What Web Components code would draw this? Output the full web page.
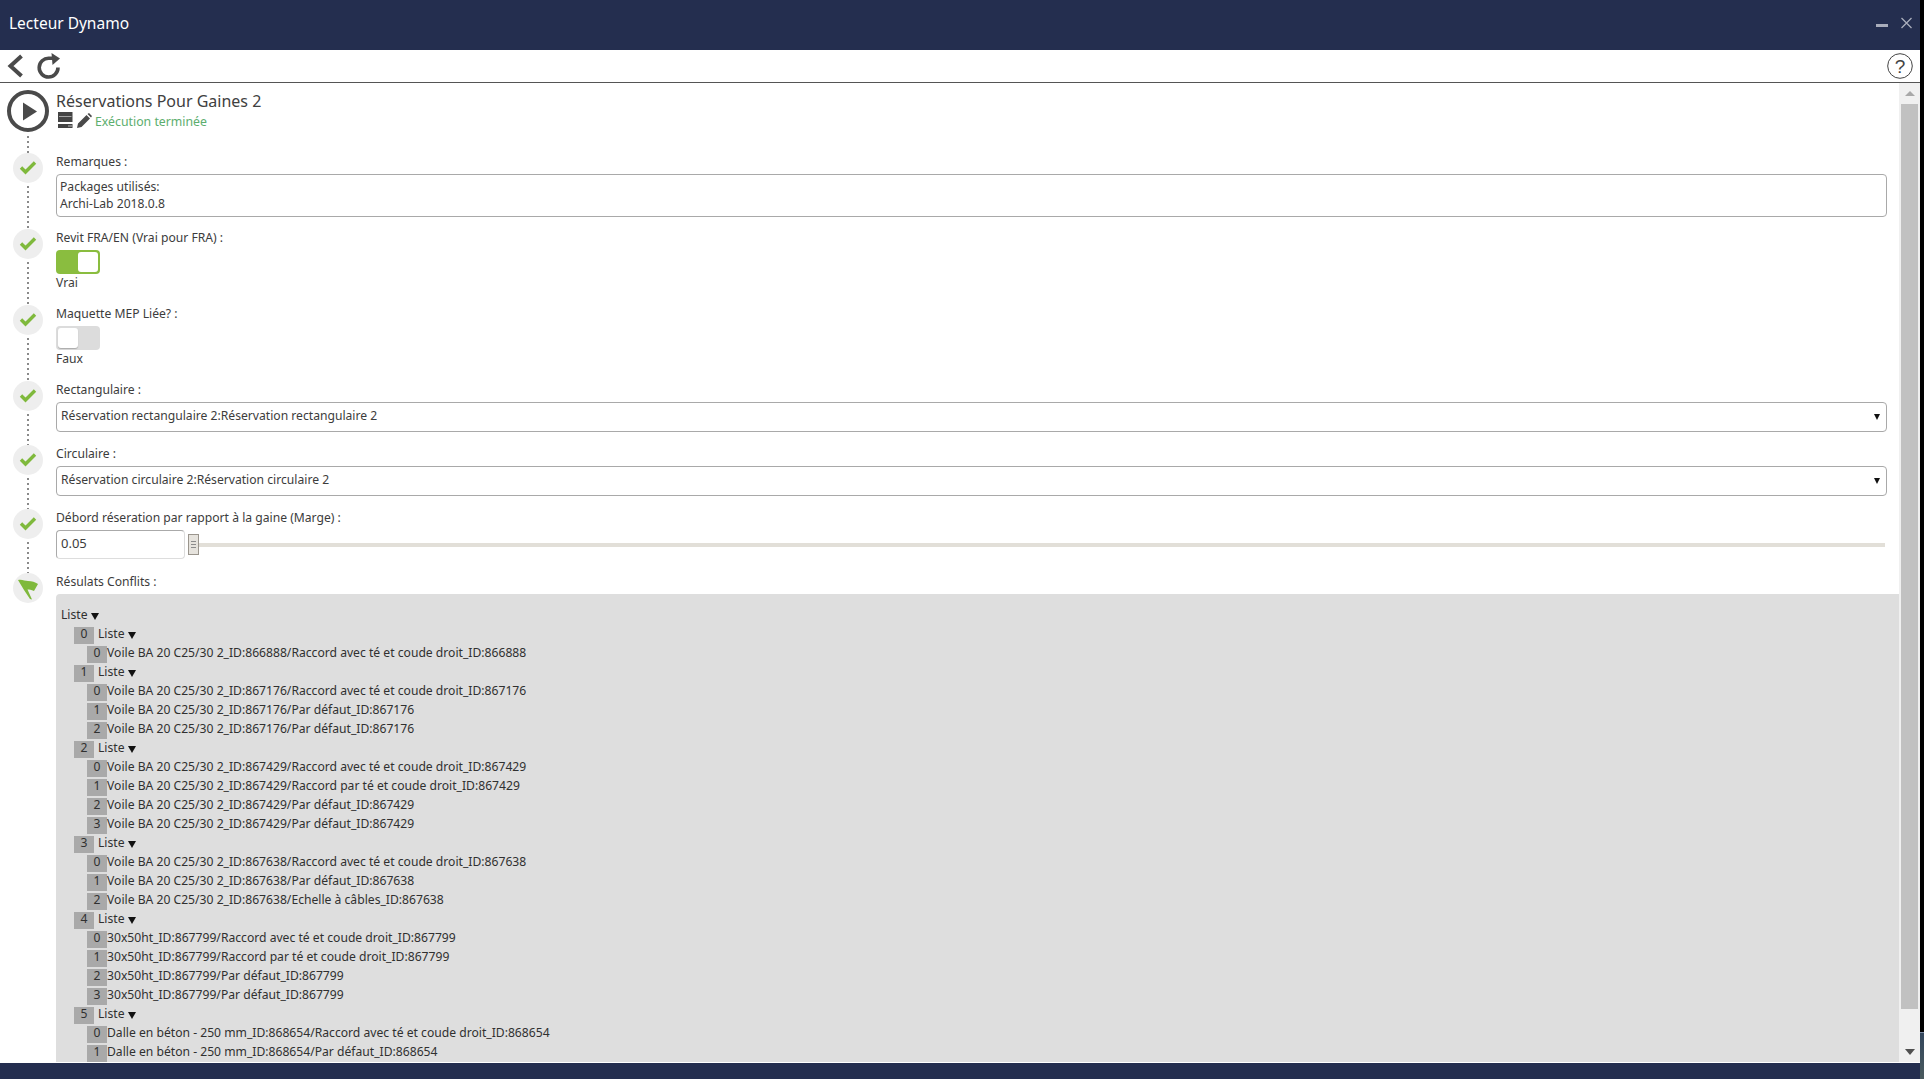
<!DOCTYPE html>
<html lang="fr">
<head>
<meta charset="utf-8">
<title>Lecteur Dynamo</title>
<style>
  html, body { margin: 0; height: 100%; background: #000; overflow: hidden; }
  body { display: flex; font-family: "Noto Sans", "Liberation Sans", sans-serif; font-size: 12px; color: #3c3c3c; }
</style>
</head>
<body>
<player-window>
  <player-step slot="steps" kind="play">
    <graph-header name="Réservations Pour Gaines 2" status="Exécution terminée"></graph-header>
  </player-step>
  <player-step slot="steps" label="Remarques :">
    <note-box>Packages utilisés:<br>Archi-Lab 2018.0.8</note-box>
  </player-step>
  <player-step slot="steps" label="Revit FRA/EN (Vrai pour FRA) :">
    <bool-toggle on></bool-toggle>
  </player-step>
  <player-step slot="steps" label="Maquette MEP Liée? :">
    <bool-toggle></bool-toggle>
  </player-step>
  <player-step slot="steps" label="Rectangulaire :">
    <drop-select>Réservation rectangulaire 2:Réservation rectangulaire 2</drop-select>
  </player-step>
  <player-step slot="steps" label="Circulaire :">
    <drop-select>Réservation circulaire 2:Réservation circulaire 2</drop-select>
  </player-step>
  <player-step slot="steps" label="Débord réseration par rapport à la gaine (Marge) :">
    <number-slider value="0.05"></number-slider>
  </player-step>
  <player-step slot="steps" kind="flag" last label="Résulats Conflits :">
    <result-panel>
      <list-group index="0">
        <list-item index="0">Voile BA 20 C25/30 2_ID:866888/Raccord avec té et coude droit_ID:866888</list-item>
      </list-group>
      <list-group index="1">
        <list-item index="0">Voile BA 20 C25/30 2_ID:867176/Raccord avec té et coude droit_ID:867176</list-item>
        <list-item index="1">Voile BA 20 C25/30 2_ID:867176/Par défaut_ID:867176</list-item>
        <list-item index="2">Voile BA 20 C25/30 2_ID:867176/Par défaut_ID:867176</list-item>
      </list-group>
      <list-group index="2">
        <list-item index="0">Voile BA 20 C25/30 2_ID:867429/Raccord avec té et coude droit_ID:867429</list-item>
        <list-item index="1">Voile BA 20 C25/30 2_ID:867429/Raccord par té et coude droit_ID:867429</list-item>
        <list-item index="2">Voile BA 20 C25/30 2_ID:867429/Par défaut_ID:867429</list-item>
        <list-item index="3">Voile BA 20 C25/30 2_ID:867429/Par défaut_ID:867429</list-item>
      </list-group>
      <list-group index="3">
        <list-item index="0">Voile BA 20 C25/30 2_ID:867638/Raccord avec té et coude droit_ID:867638</list-item>
        <list-item index="1">Voile BA 20 C25/30 2_ID:867638/Par défaut_ID:867638</list-item>
        <list-item index="2">Voile BA 20 C25/30 2_ID:867638/Echelle à câbles_ID:867638</list-item>
      </list-group>
      <list-group index="4">
        <list-item index="0">30x50ht_ID:867799/Raccord avec té et coude droit_ID:867799</list-item>
        <list-item index="1">30x50ht_ID:867799/Raccord par té et coude droit_ID:867799</list-item>
        <list-item index="2">30x50ht_ID:867799/Par défaut_ID:867799</list-item>
        <list-item index="3">30x50ht_ID:867799/Par défaut_ID:867799</list-item>
      </list-group>
      <list-group index="5">
        <list-item index="0">Dalle en béton - 250 mm_ID:868654/Raccord avec té et coude droit_ID:868654</list-item>
        <list-item index="1">Dalle en béton - 250 mm_ID:868654/Par défaut_ID:868654</list-item>
      </list-group>
    </result-panel>
  </player-step>
</player-window>
<desktop-edge></desktop-edge>

<script>
function shadow(el, html) {
  el.attachShadow({ mode: 'open' }).innerHTML = html;
}

const TRIANGLE = `<svg width="8" height="7" viewBox="0 0 8 7" style="display:inline-block;margin-left:3px;vertical-align:-0.5px"><path d="M0 0H8L4 7Z" fill="#111"/></svg>`;

class PlayerWindow extends HTMLElement {
  constructor() {
    super();
    shadow(this, `
      <style>
        :host { display: flex; flex-direction: column; flex: 0 0 1920px; height: 1079px; background: #fff; }
        .title { flex: 0 0 50px; background: #242e4f; color: #fff; display: flex; align-items: center;
                 justify-content: space-between; padding: 0 8px 4px 9px; box-sizing: border-box; font-size: 15.5px; }
        .win { display: flex; align-items: center; gap: 13px; color: #a9adbb; }
        .tools { flex: 0 0 33px; box-sizing: border-box; border-bottom: 1px solid #555; display: flex; align-items: center; padding: 0 7px 0 7px; gap: 12px; }
        .tools svg { display: block; }
        .tools .help { margin-left: auto; }
        .body { flex: 1 1 auto; min-height: 0; display: flex; }
        .scroll { flex: 1 1 auto; min-width: 0; overflow: hidden; display: flex; flex-direction: column; }
        .bar { flex: 0 0 21px; background: #f0f0f0; display: flex; flex-direction: column; align-items: center; }
        .arrow { flex: 0 0 21px; display: flex; align-items: center; justify-content: center; }
        .thumb { flex: 1 1 auto; width: 17px; background: #c1c1c1; }
        .after { flex: 0 0 32px; }
        .foot { flex: 0 0 17px; box-sizing: border-box; background: #242e4f; border-top: 1px solid #fff; }
      </style>
      <div class="title">
        <span>Lecteur Dynamo</span>
        <span class="win">
          <svg width="12" height="12" viewBox="0 0 12 12"><rect y="7" width="12" height="3" fill="currentColor"/></svg>
          <svg width="11" height="12" viewBox="0 0 11 12"><path d="M.5 1 10.5 11M10.5 1 .5 11" stroke="currentColor" stroke-width="1.3" fill="none"/></svg>
        </span>
      </div>
      <div class="tools">
        <svg width="17" height="24" viewBox="0 0 17 24"><path d="M14.5 2 3.5 12 14.5 22" fill="none" stroke="#4a4a4a" stroke-width="4"/></svg>
        <svg width="26" height="26" viewBox="0 0 26 26"><path d="M22 14.5A9.4 9.4 0 1 1 13 5.2H18" fill="none" stroke="#4a4a4a" stroke-width="3.6"/><path d="M15.5 0 24 5.5 16.5 12Z" fill="#4a4a4a"/></svg>
        <svg class="help" width="26" height="26" viewBox="0 0 26 26"><circle cx="13" cy="13" r="12.3" fill="none" stroke="#444" stroke-width="1"/><text x="13" y="19.5" text-anchor="middle" font-family="Liberation Sans, sans-serif" font-size="19" fill="#444">?</text></svg>
      </div>
      <div class="body">
        <div class="scroll"><slot name="steps"></slot></div>
        <div class="bar">
          <div class="arrow"><svg width="10" height="5"><path d="M0 5 5 0 10 5Z" fill="#a8a8a8"/></svg></div>
          <div class="thumb"></div>
          <div class="after"></div>
          <div class="arrow"><svg width="10" height="6"><path d="M0 0H10L5 6Z" fill="#505050"/></svg></div>
        </div>
      </div>
      <div class="foot"></div>`);
  }
}

class DesktopEdge extends HTMLElement {
  constructor() {
    super();
    shadow(this, `
      <style>
        :host { display: flex; flex-direction: column; flex: 0 0 4px; height: 1079px; }
        .top { flex: 0 0 1032px; background: #000; }
        .line { flex: 0 0 1px; background: #7f8ea6; }
        .img { flex: 1 1 auto; background: linear-gradient(#33465c, #4a5a5e); }
      </style>
      <div class="top"></div><div class="line"></div><div class="img"></div>`);
  }
}

class PlayerStep extends HTMLElement {
  constructor() {
    super();
    const kind = this.getAttribute('kind') || 'check';
    const label = this.getAttribute('label');
    const icons = {
      play: `<svg width="44" height="44" viewBox="0 0 44 44"><circle cx="22" cy="22" r="19" fill="none" stroke="#4a4a4a" stroke-width="4"/><path d="M17 13.5 31 22.5 17 31.5Z" fill="#4a4a4a"/></svg>`,
      check: `<div class="disc"><svg class="chk" width="18" height="15" viewBox="0 0 18 15"><path d="M2 7.5 6.5 12 16 2.5" fill="none" stroke="#7fb93c" stroke-width="3.4"/></svg></div>`,
      flag: `<div class="disc"><svg width="30" height="30" viewBox="0 0 30 30"><path d="M5 7C9 6 12 8 15 8 19 8 22 9 25 11L21 18C18 16.5 16.5 16.5 14.5 16.5L19 26.5 17 26 11 17Z" fill="#7fb93c"/></svg></div>`
    };
    shadow(this, `
      <style>
        :host { display: grid; grid-template-columns: 56px 1fr; flex: 0 0 auto; }
        :host([kind="play"]) .rail { padding-top: 6px; }
        :host([last]) { flex: 1 1 auto; min-height: 0; }
        .rail { display: flex; flex-direction: column; align-items: center; }
        .disc { width: 30px; height: 30px; border-radius: 50%; background: #eee; display: flex; align-items: center; justify-content: center; }
        svg { display: block; }
        .chk { transform: translateY(-1px); }
        .dots { flex: 1 1 auto; width: 2px; background: repeating-linear-gradient(#8a8a8a 0 2px, transparent 2px 5px); margin-top: 3px; }
        :host([last]) .dots { display: none; }
        .main { min-width: 0; display: flex; flex-direction: column; }
        label { flex: 0 0 21px; font-size: 12.15px; line-height: 17px; color: #3c3c3c; }
        .slot { flex: 1 1 auto; min-height: 0; display: flex; flex-direction: column; }
      </style>
      <div class="rail">${icons[kind]}<div class="dots"></div></div>
      <div class="main">${label ? `<label>${label}</label>` : ''}<div class="slot"><slot></slot></div></div>`);
  }
}

class GraphHeader extends HTMLElement {
  constructor() {
    super();
    shadow(this, `
      <style>
        :host { display: block; height: 70px; box-sizing: border-box; padding-top: 8px; }
        .name { font-size: 16px; line-height: 20px; color: #404040; }
        .sub { display: flex; align-items: center; gap: 4px; height: 20px; padding-left: 2px; }
        .status { font-size: 12.3px; color: #5cae6e; margin-left: -1px; }
        svg { display: block; transform: translateY(-1px); }
      </style>
      <div class="name">${this.getAttribute('name')}</div>
      <div class="sub">
        <svg width="15" height="16" viewBox="0 0 15 16"><path d="M0 0H14.5V10H0ZM0 12H14.5V16H0Z" fill="#444"/><path d="M1 4.5H13.5" stroke="#bbb" stroke-width=".8"/><path d="M10 14H14" stroke="#ddd" stroke-width=".8"/></svg>
        <svg width="15" height="15" viewBox="0 0 15 15"><path d="M0 15 1 10.5 9.5 2 13 5.5 4.5 14ZM10.5 1 12 0 15 3 14 4.5Z" fill="#4a4a4a"/></svg>
        <span class="status">${this.getAttribute('status')}</span>
      </div>`);
  }
}

class NoteBox extends HTMLElement {
  constructor() {
    super();
    shadow(this, `
      <style>
        :host { display: block; height: 43px; box-sizing: border-box; margin: 0 12px 12px 0; border: 1px solid #a9a9a9; border-radius: 4px;
                padding: 3px 3px; font-size: 12.15px; line-height: 17px; color: #3c3c3c; }
      </style>
      <slot></slot>`);
  }
}

class BoolToggle extends HTMLElement {
  constructor() {
    super();
    const on = this.hasAttribute('on');
    shadow(this, `
      <style>
        :host { display: block; height: 55px; }
        .sw { width: 44px; height: 24px; box-sizing: border-box; border-radius: 4px; background: #dcdcdc; padding: 2px; display: flex; }
        :host([on]) .sw { background: #8abd3f; justify-content: flex-end; }
        .knob { width: 20px; height: 20px; background: #fff; border-radius: 3px; box-shadow: 0 1px 1px #aaa; }
        :host([on]) .knob { box-shadow: none; }
        .txt { font-size: 12.15px; line-height: 18px; color: #3c3c3c; }
      </style>
      <div class="sw"><div class="knob"></div></div>
      <div class="txt">${on ? 'Vrai' : 'Faux'}</div>`);
  }
}

class DropSelect extends HTMLElement {
  constructor() {
    super();
    shadow(this, `
      <style>
        :host { display: flex; align-items: center; justify-content: space-between; height: 30px; box-sizing: border-box;
                margin: 0 12px 13px 0; border: 1px solid #a9a9a9; border-radius: 4px; padding: 0 6px 0 4px; font-size: 12.15px; color: #3c3c3c; }
        span { padding-bottom: 4px; }
      </style>
      <span><slot></slot></span>
      <svg width="6" height="6"><path d="M0 0H6L3 6Z" fill="#111"/></svg>`);
  }
}

class NumberSlider extends HTMLElement {
  constructor() {
    super();
    shadow(this, `
      <style>
        :host { display: flex; align-items: center; height: 29px; margin: 0 14px 14px 0; }
        .val { width: 129px; height: 29px; box-sizing: border-box; border: 1px solid #ddd; border-top-color: #aaa; border-left-color: #aaa; border-radius: 4px;
               padding: 0 4px; font-size: 13px; line-height: 25px; color: #3c3c3c; }
        .handle { width: 11px; height: 21px; box-sizing: border-box; margin-left: 3px; border: 1px solid #9a958d; background: #e6e3dd;
                  display: flex; flex-direction: column; justify-content: center; gap: 2px; align-items: center; }
        .handle i { display: block; width: 5px; height: 1px; background: #8c8c8c; }
        .track { flex: 1 1 auto; height: 4px; background: #e2dfd8; }
      </style>
      <div class="val">${this.getAttribute('value')}</div>
      <div class="handle"><i></i><i></i><i></i></div>
      <div class="track"></div>`);
  }
}

class ResultPanel extends HTMLElement {
  constructor() {
    super();
    shadow(this, `
      <style>
        :host { display: block; flex: 1 1 auto; height: 468px; box-sizing: border-box; background: #dedede; border-radius: 4px 0 0 0;
                overflow: hidden; padding: 11px 0 0 5px; font-size: 12.15px; line-height: 19px; color: #303030; }
        .head { height: 19px; }
      </style>
      <div class="head">Liste${TRIANGLE}</div>
      <slot></slot>`);
  }
}

class ListGroup extends HTMLElement {
  constructor() {
    super();
    shadow(this, `
      <style>
        :host { display: block; padding-left: 13px; }
        .head { display: flex; height: 19px; }
        .chip { flex: 0 0 20px; height: 17px; margin-top: 3px; background: #a9a9a9; text-align: center; line-height: 13px; }
        .lbl { margin-left: 4px; }
      </style>
      <div class="head"><span class="chip">${this.getAttribute('index')}</span><span class="lbl">Liste${TRIANGLE}</span></div>
      <slot></slot>`);
  }
}

class ListItem extends HTMLElement {
  constructor() {
    super();
    shadow(this, `
      <style>
        :host { display: flex; height: 19px; padding-left: 13px; white-space: nowrap; }
        .chip { flex: 0 0 20px; height: 17px; margin-top: 3px; background: #a9a9a9; text-align: center; line-height: 13px; }
      </style>
      <span class="chip">${this.getAttribute('index')}</span><span><slot></slot></span>`);
  }
}

customElements.define('player-window', PlayerWindow);
customElements.define('desktop-edge', DesktopEdge);
customElements.define('player-step', PlayerStep);
customElements.define('graph-header', GraphHeader);
customElements.define('note-box', NoteBox);
customElements.define('bool-toggle', BoolToggle);
customElements.define('drop-select', DropSelect);
customElements.define('number-slider', NumberSlider);
customElements.define('result-panel', ResultPanel);
customElements.define('list-group', ListGroup);
customElements.define('list-item', ListItem);
</script>
</body>
</html>
